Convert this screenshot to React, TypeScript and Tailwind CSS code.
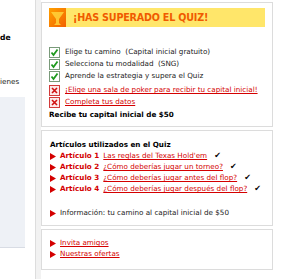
import React from "react";

const font = { fontFamily: '"DejaVu Sans", Verdana, sans-serif' };

function Check() {
  return (
    <svg width="11" height="11" viewBox="0 0 11 11" className="shrink-0">
      <rect x="0.5" y="0.5" width="10" height="10" fill="#ffffff" stroke="#7a9a7a" />
      <path d="M2.5 5.5 L4.5 8 L8.5 2.5" fill="none" stroke="#1e9a1e" strokeWidth="1.8" />
    </svg>
  );
}

function Cross() {
  return (
    <svg width="11" height="11" viewBox="0 0 11 11" className="shrink-0">
      <rect x="0.5" y="0.5" width="10" height="10" fill="#fde8e8" stroke="#d23a3a" />
      <path d="M3 3 L8 8 M8 3 L3 8" fill="none" stroke="#d01010" strokeWidth="1.6" />
    </svg>
  );
}

function Tri() {
  return (
    <svg width="6" height="7" viewBox="0 0 6 7" className="shrink-0">
      <polygon points="0,0 6,3.5 0,7" fill="#d40000" />
    </svg>
  );
}

function Tick() {
  return <span className="text-black text-[8px] leading-none">✔</span>;
}

export default function App() {
  return (
    <div className="w-[300px] h-[279px] flex bg-white overflow-hidden text-[7.2px] text-[#222]" style={font}>
      <div className="w-[36px] shrink-0 bg-white border-r border-[#dddddd] flex flex-col">
        <div className="h-[33px]" />
        <div className="font-bold text-[7.6px] leading-[10px] text-black">de</div>
        <div className="h-[34px]" />
        <div className="leading-[10px]">ienes</div>
        <div className="h-[10px]" />
        <div className="w-[25px] h-[151px] bg-[#eef1f6] border-b border-[#d8dce4]" />
      </div>
      <div className="w-[5px] shrink-0 bg-[#f2f2f2]" />
      <div className="w-[232px] shrink-0 flex flex-col gap-[3px] pt-[2px]">
        <div className="border border-[#dcdcdc] bg-white h-[125px] px-[7px] pt-[5px]">
          <div className="h-[19px] bg-[#ffe66a] flex items-center">
            <svg width="17" height="19" viewBox="0 0 17 19" className="shrink-0">
              <defs>
                <linearGradient id="g1" x1="0" y1="0" x2="1" y2="1">
                  <stop offset="0" stopColor="#ffa000" />
                  <stop offset="1" stopColor="#f26000" />
                </linearGradient>
              </defs>
              <rect width="17" height="19" fill="url(#g1)" />
              <path d="M2 4 L15 4 L10 11 L10 15 L12 17 L5 17 L7 15 L7 11 Z" fill="#ffd23a" opacity="0.85" />
            </svg>
            <span className="ml-[7px] text-[#f05a00] font-bold text-[9.6px] tracking-[-0.2px] leading-none">
              ¡HAS SUPERADO EL QUIZ!
            </span>
          </div>
          <div className="mt-[20px] flex flex-col gap-[1px]">
            <div className="flex items-center gap-[5px] h-[11px]"><Check /><span className="whitespace-pre">Elige tu camino  (Capital inicial gratuito)</span></div>
            <div className="flex items-center gap-[5px] h-[11px]"><Check /><span className="whitespace-pre">Selecciona tu modalidad  (SNG)</span></div>
            <div className="flex items-center gap-[5px] h-[11px]"><Check /><span>Aprende la estrategia y supera el Quiz</span></div>
            <div className="flex items-center gap-[5px] h-[11px] mt-[2px]"><Cross /><a className="text-[#d40000] underline">¡Elige una sala de poker para recibir tu capital inicial!</a></div>
            <div className="flex items-center gap-[5px] h-[11px]"><Cross /><a className="text-[#d40000] underline">Completa tus datos</a></div>
            <div className="h-[12px] flex items-center font-bold text-black">Recibe tu capital inicial de $50</div>
          </div>
        </div>
        <div className="border border-[#dcdcdc] bg-white h-[96px] px-[8px] pt-[9px]">
          <div className="font-bold text-black leading-[10px]">Artículos utilizados en el Quiz</div>
          <div className="flex flex-col mt-[1px]">
            {[
              ["Artículo 1", "Las reglas del Texas Hold'em"],
              ["Artículo 2", "¿Cómo deberías jugar un torneo?"],
              ["Artículo 3", "¿Cómo deberías jugar antes del flop?"],
              ["Artículo 4", "¿Cómo deberías jugar después del flop?"],
            ].map(([a, b]) => (
              <div key={a} className="flex items-center h-[11px] gap-[4px]">
                <Tri />
                <span className="font-bold text-[#d40000]">{a}</span>
                <a className="text-[#d40000] underline">{b}</a>
                <span className="ml-[3px]"><Tick /></span>
              </div>
            ))}
          </div>
          <div className="flex items-center h-[11px] gap-[4px] mt-[13px]">
            <Tri />
            <span>Información: tu camino al capital inicial de $50</span>
          </div>
        </div>
        <div className="border border-[#dcdcdc] bg-white h-[41px] px-[8px] pt-[8px]">
          <div className="flex items-center h-[11px] gap-[4px]"><Tri /><a className="text-[#d40000] underline">Invita amigos</a></div>
          <div className="flex items-center h-[11px] gap-[4px]"><Tri /><a className="text-[#d40000] underline">Nuestras ofertas</a></div>
        </div>
      </div>
    </div>
  );
}
